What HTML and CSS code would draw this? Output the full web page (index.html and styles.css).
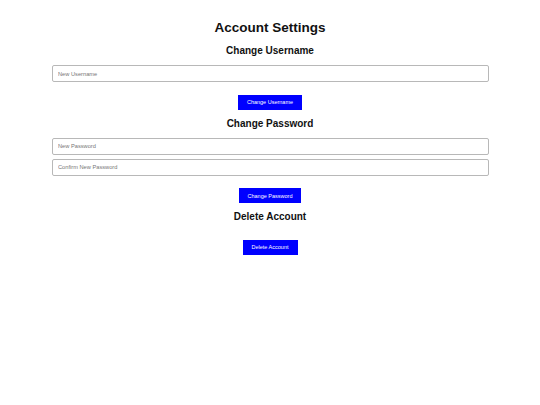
FILE: index.html
```html
<!DOCTYPE html>
<html lang="en">
<head>
    <meta charset="UTF-8">
    <meta name="viewport" content="width=device-width, initial-scale=1.0">
    <title>Account Settings</title>
    <link rel="stylesheet" href="styles.css">
</head>
<body>
    <div class="settings">
        <h1>Account Settings</h1>

        <section class="section">
            <h2>Change Username</h2>
            <input type="text" placeholder="New Username">
            <button>Change Username</button>
        </section>

        <section class="section">
            <h2>Change Password</h2>
            <input type="password" placeholder="New Password">
            <input type="password" placeholder="Confirm New Password">
            <button>Change Password</button>
        </section>

        <section class="section">
            <h2>Delete Account</h2>
            <button>Delete Account</button>
        </section>
    </div>
</body>
</html>
```

FILE: styles.css
```css
body {
    font-family: "Liberation Sans", Arial, sans-serif;
    margin: 0;
    background-color: #fff;
    color: #111;
}

.settings {
    max-width: 437px;
    margin: 0 auto;
    padding-top: 20px;
    display: flex;
    flex-direction: column;
}

h1 {
    font-size: 13.5px;
    line-height: 16px;
    margin: 0;
    text-align: center;
}

.section {
    display: flex;
    flex-direction: column;
    align-items: center;
}

h2 {
    font-size: 10px;
    line-height: 12px;
    margin: 8px 0;
    text-align: center;
}

.section:first-of-type h2 {
    margin-top: 9px;
}

input {
    box-sizing: border-box;
    width: 100%;
    height: 17px;
    margin-bottom: 4px;
    padding: 0 5.5px;
    font-family: inherit;
    font-size: 5.7px;
    border: 1px solid #b8b8b8;
    border-radius: 2px;
}

input::placeholder {
    color: #777;
}

button {
    margin-top: 8.5px;
    height: 15px;
    padding: 0 9px;
    font-family: inherit;
    font-size: 5.5px;
    border: none;
    background-color: #0000ff;
    color: #fff;
    cursor: pointer;
}
```
